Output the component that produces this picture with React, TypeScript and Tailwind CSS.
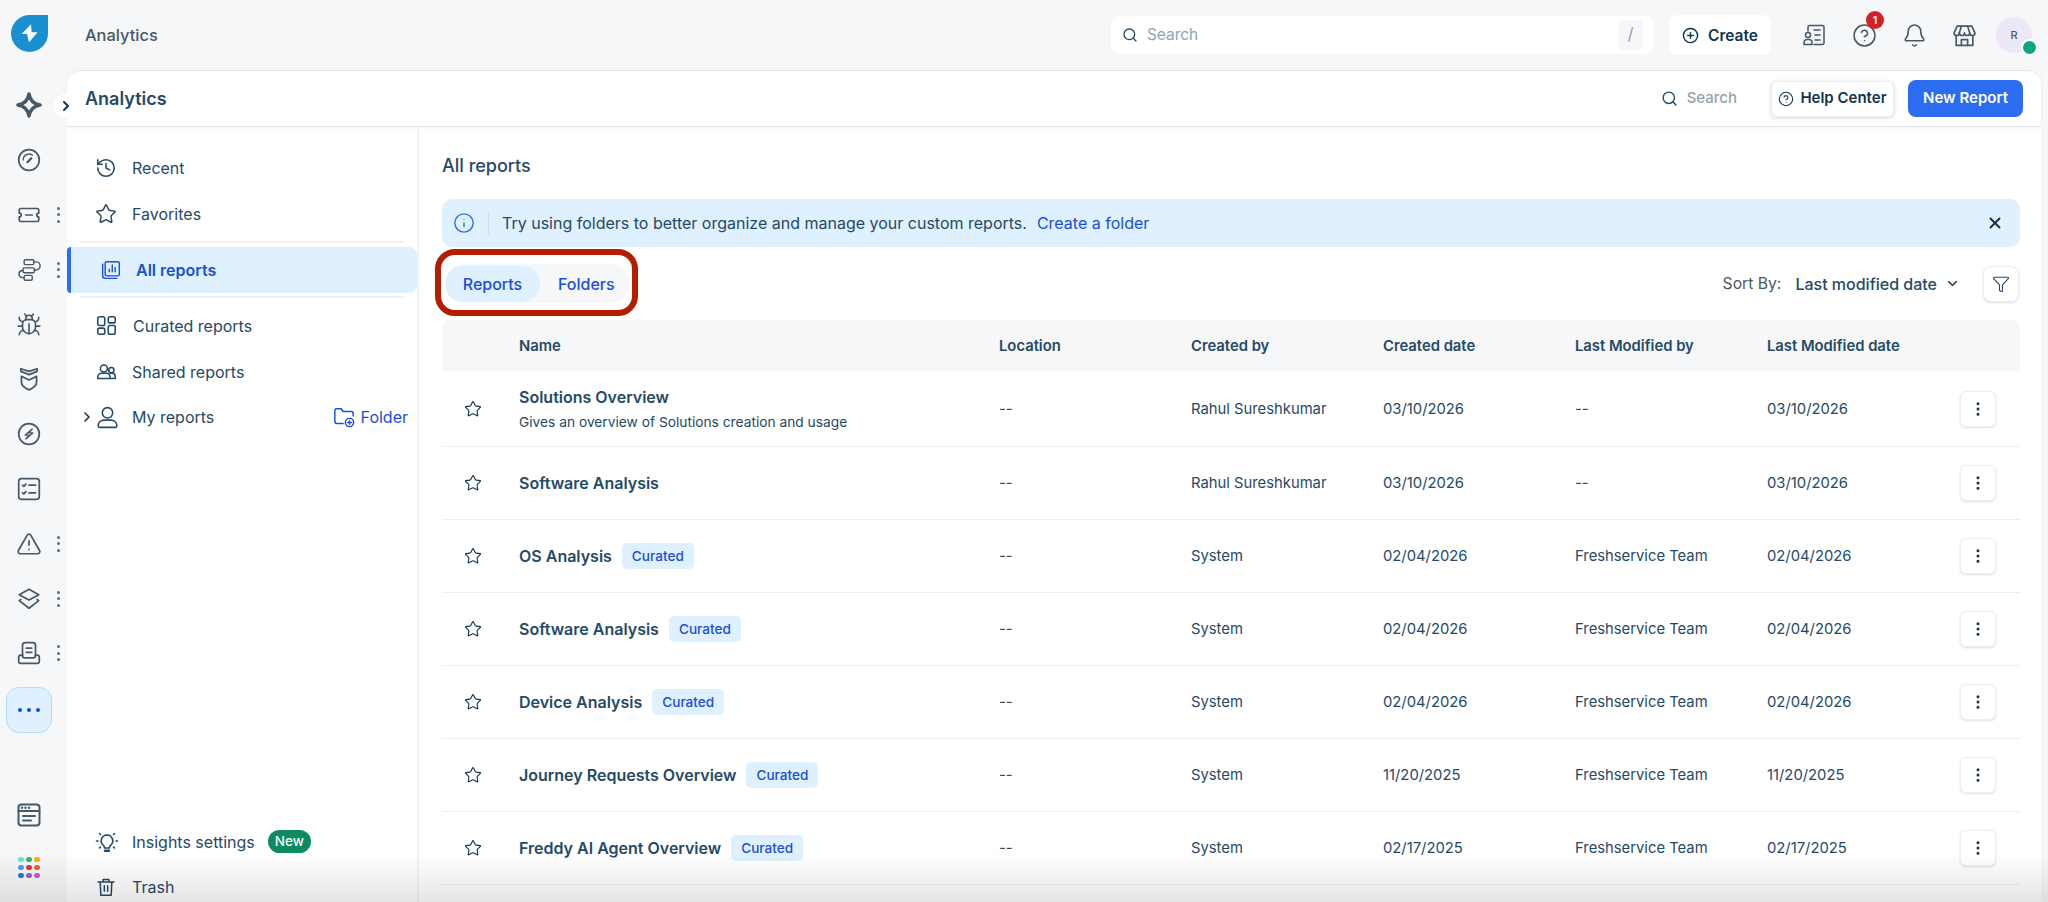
import {
  Bell,
  ChevronDown,
  ChevronRight,
  CircleHelp,
  CirclePlus,
  EllipsisVertical,
  Funnel,
  History,
  Info,
  Search,
  Star,
  TriangleAlert,
  Bug,
  X,
} from "lucide-react";

const railStroke = {
  fill: "none",
  stroke: "currentColor",
  strokeWidth: 1.6,
  strokeLinecap: "round" as const,
  strokeLinejoin: "round" as const,
};

function Svg({ size = 26, children }: { size?: number; children: React.ReactNode }) {
  return (
    <svg width={size} height={size} viewBox="0 0 24 24" {...railStroke}>
      {children}
    </svg>
  );
}

const SparkleIcon = () => (
  <Svg size={28}>
    <path d="M12 2.500c.9 5.600 3.900 8.600 9.500 9.500-5.600.9-8.600 3.900-9.500 9.500-.9-5.600-3.900-8.600-9.500-9.500 5.600-.9 8.600-3.900 9.500-9.500Z" strokeWidth={3} />
  </Svg>
);
const GaugeIcon = () => (
  <Svg>
    <circle cx="12" cy="12" r="9.500" />
    <path d="M6.500 12a5.500 5.500 0 0 1 5.500-5.500c1.200 0 2.300.4 3.200 1" strokeWidth={1.300} />
    <path d="m10.500 14 3.500-3.500" strokeWidth={2} />
  </Svg>
);
const TicketIcon = () => (
  <Svg>
    <path d="M4.500 6h15A1.500 1.500 0 0 1 21 7.500v2.700a1.800 1.800 0 0 0 0 3.600v2.700a1.500 1.500 0 0 1-1.500 1.500h-15A1.500 1.500 0 0 1 3 16.500v-2.700a1.800 1.800 0 0 0 0-3.600V7.500A1.500 1.500 0 0 1 4.500 6Z" />
    <path d="M9 12h6" />
  </Svg>
);
const FlowIcon = () => (
  <Svg>
    <rect x="7.500" y="2.500" width="9" height="4.500" rx="1.200" strokeWidth={1.300} />
    <rect x="6.500" y="10" width="10.500" height="4.500" rx="1.200" strokeWidth={1.300} />
    <rect x="7.500" y="17" width="7.500" height="4.500" rx="1.200" strokeWidth={1.300} />
    <path d="M16.500 4.500h2a3.500 3.500 0 0 1 0 7.500H17M6.500 12.500H5.500a3.300 3.300 0 0 0 0 6.500h2" strokeWidth={1.300} />
  </Svg>
);
const ShieldIcon = () => (
  <Svg>
    <path d="M4.500 2.500 12 5l7.500-2.500V5L12 8 4.500 5V2.500Z" />
    <path d="M5 9.500 12 13l7-3.500V15c0 3-3.500 5.500-7 7-3.500-1.500-7-4-7-7V9.500Z" />
  </Svg>
);
const CompassBoltIcon = () => (
  <Svg>
    <circle cx="12" cy="12" r="9.500" />
    <path d="M15 7.500 8.500 13H12l-3 3.500L15.500 11H12l3-3.500Z" strokeWidth={1.300} />
  </Svg>
);
const ChecklistIcon = () => (
  <Svg>
    <rect x="2.500" y="2.500" width="19" height="19" rx="2.500" />
    <path d="m6 8.500 1.200 1 2-2M6 15.500l1.200 1 2-2M12 8.500h6M12 15.500h6" />
  </Svg>
);
const LayersIcon = () => (
  <Svg>
    <path d="m12 3 9 5-9 5-9-5 9-5Z" />
    <path d="m4.500 12.500-1.500 1 9 7 9-7-1.500-1" />
  </Svg>
);
const InboxDocIcon = () => (
  <Svg>
    <path d="M6 15V5a2.500 2.500 0 0 1 2.500-2.500h7A2.500 2.500 0 0 1 18 5v10" />
    <path d="M9.500 7.500h5M9.500 11.500h5" />
    <path d="M6 14H4.500A2 2 0 0 0 2.500 16v3.500a2 2 0 0 0 2 2h15a2 2 0 0 0 2-2V16a2 2 0 0 0-2-2H18c0 1.500-1 2.500-2 2.500H8c-1 0-2-1-2-2.500Z" />
  </Svg>
);
const WindowIcon = () => (
  <svg width="24" height="24" viewBox="0 0 24 24" {...railStroke} strokeWidth={2}>
    <rect x="1.500" y="1.500" width="21" height="21" rx="3" />
    <path d="M1.500 8h21M6 13h12M6 17.500h8" />
    <path d="M5 4.800h.01M8.500 4.800h.01M12 4.800h.01" strokeWidth={2.400} />
  </svg>
);
const StoreIcon = () => (
  <svg width="25" height="25" viewBox="0 0 24 24" {...railStroke}>
    <path d="M5 3h14l3 6.500a2.500 2.500 0 0 1-5 0 2.500 2.500 0 0 1-5 0 2.500 2.500 0 0 1-5 0 2.500 2.500 0 0 1-5 0L5 3Z" />
    <path d="M9 3 7 9.500M15 3l2 6.500M4 12.500V21.500h16v-9" />
    <path d="M9 21.500V16h6v5.500" />
  </svg>
);
const BulbIcon = () => (
  <svg width="24" height="24" viewBox="0 0 24 24" {...railStroke}>
    <path d="M12 5a5.800 5.800 0 0 0-3.600 10.300c.7.7 1.100 1.500 1.100 2.700h5c0-1.200.4-2 1.100-2.700A5.800 5.800 0 0 0 12 5Z" />
    <path d="M10 20.700h4" strokeWidth={2.400} />
    <path d="M1.500 11H3M21 11h1.500M4.500 3.500l1 1M19.500 3.500l-1 1M4.500 18l1-1M19.500 18l-1-1" />
  </svg>
);
const TrashIcon = () => (
  <svg width="22" height="22" viewBox="0 0 24 24" {...railStroke} strokeWidth={1.800}>
    <path d="M2.500 6h19M8.500 6V3h7v3M5 6l.8 16h12.400L19 6M10 10.500V17M14 10.500V17" />
  </svg>
);
const UserIcon = () => (
  <svg width="25" height="25" viewBox="0 0 24 24" {...railStroke} strokeWidth={1.500}>
    <circle cx="12" cy="7.500" r="5" />
    <path d="M3 20v-.5A5.500 5.500 0 0 1 8.500 14.500h7A5.500 5.500 0 0 1 21 19.500v.5a1.500 1.500 0 0 1-1.500 1.500h-15A1.500 1.500 0 0 1 3 20Z" />
  </svg>
);

const appDots = [
  "#5eead4",
  "#2fb96b",
  "#fbb000",
  "#4a9ff0",
  "#e0364a",
  "#f0602a",
  "#2f78c4",
  "#a45cc8",
  "#b860cc",
];

const railItems = [
  { icon: <SparkleIcon /> },
  { icon: <GaugeIcon /> },
  { icon: <TicketIcon />, menu: true },
  { icon: <FlowIcon />, menu: true },
  { icon: <Bug size={26} strokeWidth={1.500} /> },
  { icon: <ShieldIcon /> },
  { icon: <CompassBoltIcon /> },
  { icon: <ChecklistIcon /> },
  { icon: <TriangleAlert size={26} strokeWidth={1.600} />, menu: true },
  { icon: <LayersIcon />, menu: true },
  { icon: <InboxDocIcon />, menu: true },
];

function MenuDots() {
  return (
    <span className="absolute left-[56.500px] top-1/2 flex -translate-y-1/2 flex-col gap-[3.500px]">
      <i className="size-[3px] rounded-full bg-[#5a6b79]" />
      <i className="size-[3px] rounded-full bg-[#5a6b79]" />
      <i className="size-[3px] rounded-full bg-[#5a6b79]" />
    </span>
  );
}

function Rail() {
  return (
    <aside className="flex h-full w-[67px] shrink-0 flex-col items-center pb-[24px] pt-[15px] pr-[9px] text-[#475867]">
      <div className="size-[37px] rounded-full rounded-tr-[6px] bg-[#1b90d0]">
        <svg width="37" height="37" viewBox="0 0 37 37" fill="white">
          <path d="M20 9.300 10.700 19H16l2 8.300 8.700-10h-6L20 9.300Z" />
        </svg>
      </div>
      <div className="mt-[26px] flex flex-col">
        {railItems.map((item, i) => (
          <div key={i} className="relative flex h-[54.800px] w-[58px] items-center justify-center">
            {item.icon}
            {item.menu && <MenuDots />}
          </div>
        ))}
      </div>
      <button className="mt-[6px] flex h-[46px] w-[46px] items-center justify-center gap-[5px] rounded-[13px] border border-[#b8dbfb] bg-[#dff0ff]">
        <i className="size-[4px] rounded-full bg-[#0b4de0]" />
        <i className="size-[4px] rounded-full bg-[#0b4de0]" />
        <i className="size-[4px] rounded-full bg-[#0b4de0]" />
      </button>
      <div className="mt-auto flex flex-col items-center gap-[30px]">
        <WindowIcon />
        <div className="grid grid-cols-3 gap-[2.500px]">
          {appDots.map((c) => (
            <i key={c} className="size-[5.500px] rounded-full" style={{ background: c }} />
          ))}
        </div>
      </div>
    </aside>
  );
}

function TopBar() {
  return (
    <header className="flex h-[70px] shrink-0 items-center pl-[18px] pr-[9px]">
      <span className="text-[16.400px] font-medium text-[#475867]">Analytics</span>
      <div className="ml-auto flex h-[38px] w-[543px] items-center rounded-lg bg-white pl-[11px] pr-[11px]">
        <Search size={16} className="text-[#264966]" />
        <span className="ml-[9px] text-[15.400px] text-[#92a2b1]">Search</span>
        <span className="ml-auto flex h-[30px] w-[25px] items-center justify-center rounded bg-[#f5f7f9] text-[17px] text-[#92a2b1]">
          /
        </span>
      </div>
      <button className="ml-[15px] flex h-[40px] w-[102px] items-center justify-center gap-[9px] rounded-lg bg-white pt-[1px] text-[15.500px] font-semibold text-[#12344d]">
        <CirclePlus size={17} />
        Create
      </button>
      <div className="ml-[18px] flex text-[#475867]">
        <div className="flex h-[36px] w-[50px] items-center justify-center">
          <svg width="24" height="24" viewBox="0 0 24 24" fill="none" stroke="currentColor" strokeWidth="1.500" strokeLinecap="round">
            <path d="M6 8V4a1.500 1.500 0 0 1 1.500-1.500h13A1.500 1.500 0 0 1 22 4v16a1.500 1.500 0 0 1-1.500 1.500H12" />
            <circle cx="6" cy="12" r="2.500" />
            <path d="M2 21.500v-2a3 3 0 0 1 3-3h2a3 3 0 0 1 3 3v2H2ZM12 7h6M13 12h5M13 17h5" />
          </svg>
        </div>
        <div className="relative flex h-[36px] w-[50px] items-center justify-center">
          <CircleHelp size={25} strokeWidth={1.500} />
          <span className="absolute left-[27px] top-[-6px] flex size-[18px] items-center justify-center rounded-full bg-[#d32024] text-[11px] font-semibold text-white">
            1
          </span>
        </div>
        <div className="flex h-[36px] w-[50px] items-center justify-center">
          <Bell size={25} strokeWidth={1.500} />
        </div>
        <div className="flex h-[36px] w-[50px] items-center justify-center">
          <StoreIcon />
        </div>
        <div className="relative flex h-[36px] w-[50px] items-center justify-center">
          <span className="flex size-[36px] items-center justify-center rounded-full bg-[#ece8f8] text-[11px] font-medium text-[#475867]">
            R
          </span>
          <span className="absolute left-[32px] top-[22px] size-[17px] rounded-full border-2 border-white bg-[#0fa67f]" />
        </div>
      </div>
    </header>
  );
}

const navText = "text-[16px] text-[#264966]";
const navIcon = "text-[#264966]";

function NavRow({
  icon,
  label,
  gap = "ml-[16px]",
}: {
  icon: React.ReactNode;
  label: string;
  gap?: string;
}) {
  return (
    <div className="flex h-[45.700px] items-center pl-[29px]">
      <span className={`flex w-[20px] items-center justify-center ${navIcon}`}>{icon}</span>
      <span className={`${navText} ${gap}`}>{label}</span>
    </div>
  );
}

function Sidebar() {
  return (
    <nav className="flex w-[352px] shrink-0 flex-col overflow-hidden border-r-2 border-[#f0f2f6] pt-[18px]">
      <NavRow icon={<History size={22} strokeWidth={1.700} className="shrink-0" />} label="Recent" />
      <NavRow icon={<Star size={22} strokeWidth={1.600} className="shrink-0" />} label="Favorites" />
      <div className="mx-[13px] mt-[4.600px] h-[2px] bg-[#f0f2f5]" />
      <div className="mt-[4px] flex h-[46px] items-center rounded-r-lg rounded-l-[4px] border-l-[4px] border-[#2b6cf0] bg-[#dff0ff] pl-[30px]">
        <svg width="20" height="20" viewBox="0 0 24 24" fill="none" stroke="#1a4fd6" strokeWidth="1.700" strokeLinecap="round" strokeLinejoin="round">
          <rect x="5" y="2" width="17" height="17" rx="2" />
          <path d="M2 5v14a3 3 0 0 0 3 3h14M10 14v-3M13.500 14V6M17 14V9" />
        </svg>
        <span className="ml-[15px] text-[16px] font-semibold text-[#1a4fd6]">All reports</span>
      </div>
      <div className="mx-[13px] mt-[3px] h-[2px] bg-[#f0f2f5]" />
      <div className="mt-[5px]">
        <NavRow
          icon={
            <svg width="21" height="21" viewBox="0 0 24 24" fill="none" stroke="currentColor" strokeWidth="1.800" className="shrink-0">
              <rect x="2" y="2" width="8" height="10" rx="2" />
              <rect x="14" y="2" width="8" height="7" rx="2" />
              <rect x="2" y="15" width="8" height="7" rx="2" />
              <rect x="14" y="12" width="8" height="10" rx="2" />
            </svg>
          }
          label="Curated reports"
          gap="ml-[17px]"
        />
        <NavRow
          icon={
            <svg width="21" height="21" viewBox="0 0 24 24" fill="none" stroke="currentColor" strokeWidth="1.800" strokeLinejoin="round" className="shrink-0">
              <circle cx="9" cy="8.500" r="4" />
              <circle cx="17.500" cy="10.500" r="3" />
              <path d="M2 20v-1.500C2 15.500 4.500 14 6 14h6c2 0 4 1.500 4 4.500V20H2ZM16 14h3c1.500 0 3 1.500 3 4v2h-6" />
            </svg>
          }
          label="Shared reports"
        />
        <div className="flex h-[45.700px] items-center pr-[9px]">
          <ChevronRight size={16} strokeWidth={2.400} className="ml-[12px] shrink-0 text-[#12344d]" />
          <span className={navIcon}>
            <UserIcon />
          </span>
          <span className={`ml-[12px] ${navText}`}>My reports</span>
          <span className="ml-auto flex items-center gap-[6px] text-[16px] text-[#1a4fd6]">
            <svg width="22" height="22" viewBox="0 0 24 24" fill="none" stroke="currentColor" strokeWidth="1.600" strokeLinecap="round">
              <path d="M11 19H4a2 2 0 0 1-2-2V5a2 2 0 0 1 2-2h5l2 3h9a2 2 0 0 1 2 2v3" />
              <circle cx="18" cy="18" r="4.500" />
              <path d="M18 16v4M16 18h4" />
            </svg>
            Folder
          </span>
        </div>
      </div>
      <div className="mt-auto -mb-[8px]">
        <div className="flex h-[45px] items-center pl-[28px]">
          <span className={navIcon}>
            <BulbIcon />
          </span>
          <span className={`ml-[13px] ${navText}`}>Insights settings</span>
          <span className="ml-[13px] rounded-full bg-[#0c8a62] px-[7px] py-[2px] text-[13.500px] font-medium leading-[19px] text-white">
            New
          </span>
        </div>
        <NavRow icon={<TrashIcon />} label="Trash" />
      </div>
    </nav>
  );
}

const reports = [
  {
    name: "Solutions Overview",
    desc: "Gives an overview of Solutions creation and usage",
    by: "Rahul Sureshkumar",
    created: "03/10/2026",
    modBy: "--",
    modified: "03/10/2026",
    tall: true,
  },
  { name: "Software Analysis", by: "Rahul Sureshkumar", created: "03/10/2026", modBy: "--", modified: "03/10/2026" },
  { name: "OS Analysis", curated: true, by: "System", created: "02/04/2026", modBy: "Freshservice Team", modified: "02/04/2026" },
  { name: "Software Analysis", curated: true, by: "System", created: "02/04/2026", modBy: "Freshservice Team", modified: "02/04/2026" },
  { name: "Device Analysis", curated: true, by: "System", created: "02/04/2026", modBy: "Freshservice Team", modified: "02/04/2026" },
  { name: "Journey Requests Overview", curated: true, by: "System", created: "11/20/2025", modBy: "Freshservice Team", modified: "11/20/2025" },
  { name: "Freddy AI Agent Overview", curated: true, by: "System", created: "02/17/2025", modBy: "Freshservice Team", modified: "02/17/2025" },
];

const cols = "grid grid-cols-[77px_480px_192px_192px_192px_192px_1fr] items-center";

function ReportsTable() {
  return (
    <div>
      <div className={`${cols} h-[51px] rounded-t-lg bg-[#f5f7f9] pt-[2px] text-[14.800px] font-semibold text-[#264966]`}>
        <span />
        <span>Name</span>
        <span>Location</span>
        <span>Created by</span>
        <span>Created date</span>
        <span>Last Modified by</span>
        <span>Last Modified date</span>
      </div>
      {reports.map((r, i) => (
        <div
          key={i}
          className={`${cols} border-b border-[#ebeff3] text-[14.800px] text-[#264966] ${r.tall ? "h-[76px]" : "h-[73px]"}`}
        >
          <span className="flex pl-[22px]">
            <Star size={18} strokeWidth={1.500} className="text-[#12344d]" />
          </span>
          <div>
            <div className="flex items-center gap-[10px]">
              <span className="text-[16px] font-semibold text-[#264966]">{r.name}</span>
              {r.curated && (
                <span className="flex h-[26px] items-center rounded-[5px] bg-[#dff0ff] px-[10px] text-[13.600px] font-medium text-[#1a4fd6]">
                  Curated
                </span>
              )}
            </div>
            {r.desc && <div className="mt-[3px] text-[13.750px] text-[#264966]">{r.desc}</div>}
          </div>
          <span className="pt-[1px]">--</span>
          <span className="pt-[1px]">{r.by}</span>
          <span className="pt-[1px]">{r.created}</span>
          <span className="pt-[1px]">{r.modBy}</span>
          <div className="flex items-center justify-between pr-[24px]">
            <span className="pt-[1px]">{r.modified}</span>
            <button className="flex size-[36px] items-center justify-center rounded-md border border-[#ebeff3] bg-white shadow-sm">
              <EllipsisVertical size={18} className="text-[#12344d]" />
            </button>
          </div>
        </div>
      ))}
    </div>
  );
}

function MainContent() {
  return (
    <main className="min-w-0 flex-1 overflow-hidden pl-[23px] pr-[21px] pt-[27px]">
      <h2 className="text-[18px] font-medium leading-[24px] text-[#264966]">All reports</h2>
      <div className="mt-[21px] flex h-[48px] items-center rounded-[10px] bg-[#dff0ff] pl-[11px] pr-[16px] text-[16px] text-[#264966]">
        <Info size={22} strokeWidth={1.500} className="text-[#2b6cf0]" />
        <span className="mx-[13px] h-[24px] w-px bg-[#cfdeea]" />
        <span>Try using folders to better organize and manage your custom reports.</span>
        <a className="ml-[10px] text-[#1a4fd6]">Create a folder</a>
        <X size={18} strokeWidth={2.500} className="ml-auto text-[#12344d]" />
      </div>
      <div className="flex h-[73px] items-center justify-between">
        <div className="relative ml-[3px] flex h-[39px] w-[185px] items-center rounded-full bg-[#f5f7f9]">
          <span className="flex h-[36px] w-[95px] items-center justify-center rounded-full bg-[#dff0ff] text-[16px] font-medium text-[#1a4fd6]">
            Reports
          </span>
          <span className="ml-[18px] text-[16px] font-medium text-[#1a4fd6]">Folders</span>
          <span className="pointer-events-none absolute -left-[10px] -right-[8px] -top-[15px] -bottom-[13px] rounded-[20px] border-[6px] border-[#b31e00]" />
        </div>
        <div className="flex items-center">
          <span className="text-[15.700px] text-[#475867]">Sort By:</span>
          <span className="ml-[14px] text-[16px] font-medium text-[#264966]">Last modified date</span>
          <ChevronDown size={15} strokeWidth={2.400} className="ml-[8px] text-[#264966]" />
          <button className="ml-[23px] mr-[1px] flex size-[36px] items-center justify-center rounded-lg border border-[#ebeff3] bg-white shadow-sm">
            <Funnel size={18} strokeWidth={1.500} className="text-[#264966]" />
          </button>
        </div>
      </div>
      <ReportsTable />
    </main>
  );
}

export default function App() {
  return (
    <div className="relative flex h-screen w-full overflow-hidden bg-[#f5f7f9] font-['Inter',sans-serif]">
      <Rail />
      <div className="flex min-w-0 flex-1 flex-col">
        <TopBar />
        <section className="mr-[7px] flex min-h-0 flex-1 flex-col rounded-t-[14px] border-t border-[#e4e8ee] bg-white">
          <div className="flex h-[56px] shrink-0 items-center border-b border-[#e4e8ee] pl-[18px] pr-[18px] shadow-[0_1px_2px_rgba(18,52,77,0.06)]">
            <h1 className="text-[18px] font-semibold text-[#264966]">Analytics</h1>
            <div className="ml-auto flex items-center text-[15px] font-medium text-[#92a2b1]">
              <Search size={17} className="mr-[9px] text-[#264966]" />
              Search
            </div>
            <button className="ml-[34px] flex h-[36px] w-[123px] items-center justify-center gap-[6px] rounded-md border border-[#ebeff3] bg-white text-[15px] font-semibold text-[#12344d] shadow-[0_1px_4px_rgba(18,52,77,0.18)]">
              <CircleHelp size={16} strokeWidth={1.600} />
              Help Center
            </button>
            <button className="ml-[14px] h-[37px] w-[115px] rounded-lg bg-[#2b6cf0] text-[15px] font-semibold text-white">
              New Report
            </button>
          </div>
          <div className="flex min-h-0 flex-1">
            <Sidebar />
            <MainContent />
          </div>
        </section>
      </div>
      {/* collapse toggle sits over the rail/panel edge */}
      <span className="absolute left-[54px] top-[94px] flex size-[24px] items-center justify-center rounded-full bg-white">
        <ChevronRight size={16} strokeWidth={3} className="text-[#12344d]" />
      </span>
      <div className="pointer-events-none absolute inset-x-0 bottom-0 h-[50px] bg-gradient-to-t from-black/10 to-transparent" />
    </div>
  );
}
